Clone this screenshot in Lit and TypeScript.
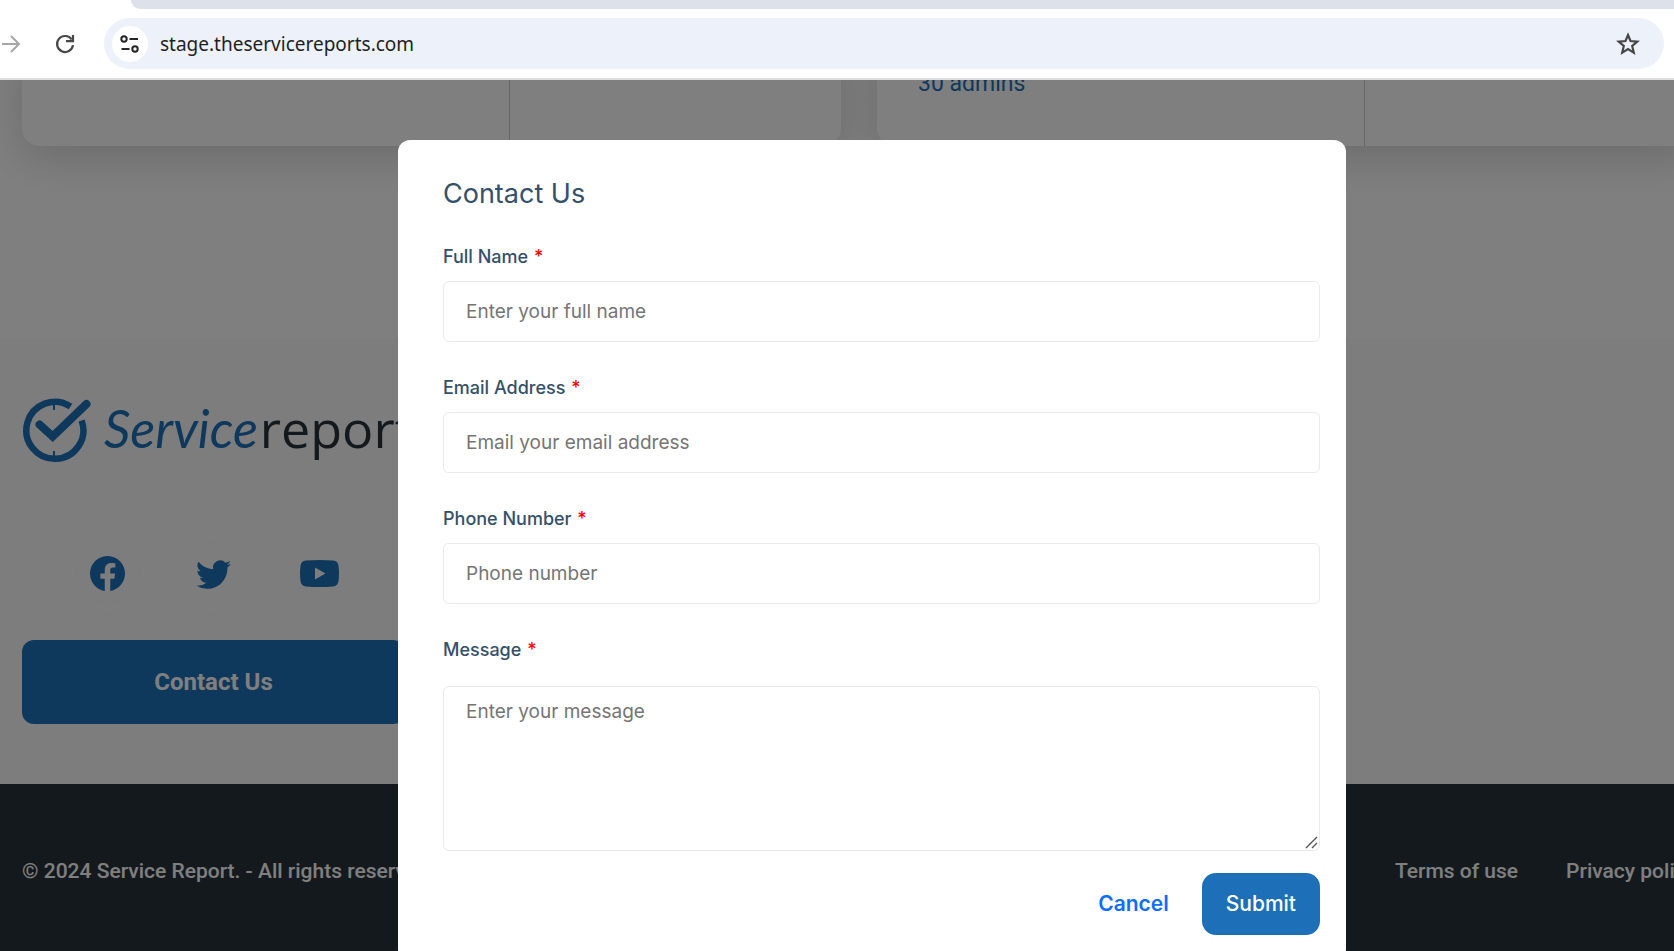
import { LitElement, html, css } from "lit";
import { customElement } from "lit/decorators.js";

@customElement("browser-bar")
export class BrowserBar extends LitElement {
  static styles = css`
    :host { display: block; background: #fff; }
    .tabs { display: flex; height: 9px; padding-left: 131px; }
    .strip { flex: 1; background: #dde1e9; border-bottom-left-radius: 12px; }
    .bar {
      display: flex; align-items: center; padding: 9px 10px 9px 0;
      border-bottom: 2px solid #dfdfdf;
    }
    .nav { display: flex; width: 104px; }
    button { border: 0; background: none; padding: 0; display: block; }
    .forward { width: 24px; height: 24px; }
    .reload { width: 24px; height: 24px; margin-left: 29px; }
    svg { display: block; }
    .omnibox {
      flex: 1; min-width: 0; display: flex; align-items: center; gap: 12px;
      height: 51px; border-radius: 26px; background: #ecf1fa; padding: 0 24px 0 8px;
      box-sizing: border-box;
    }
    .site { width: 36px; height: 36px; border-radius: 50%; background: #fff; }
    .url {
      flex: 1; min-width: 0; border: 0; background: none; outline: 0; padding: 0;
      color: #1f1f1f; font: 19px/28px "Noto Sans", sans-serif;
    }
  `;

  render() {
    return html`
      <div class="tabs"><div class="strip"></div></div>
      <div class="bar">
        <div class="nav">
          <button class="forward" aria-label="Forward">
            <svg width="24" height="24" viewBox="0 0 24 24" fill="none" stroke="#a6a6a6" stroke-width="2">
              <path d="M2 12H19M11 4l8 8-8 8" />
            </svg>
          </button>
          <button class="reload" aria-label="Reload">
            <svg width="24" height="24" viewBox="0 0 24 24" fill="none" stroke="#474747" stroke-width="2.2">
              <path d="M18.7 7.5A8 8 0 1 0 20 13.2" />
              <path d="M20 3v6.2h-7" />
            </svg>
          </button>
        </div>
        <div class="omnibox">
          <button class="site" aria-label="View site information">
            <svg width="36" height="36" viewBox="0 0 36 36" fill="none" stroke="#262626" stroke-width="2">
              <circle cx="12" cy="13" r="2.7" />
              <path d="M17.5 13h8.5M9.5 23h8" />
              <circle cx="23" cy="23" r="2.7" />
            </svg>
          </button>
          <input class="url" aria-label="Address" value="stage.theservicereports.com" />
          <button aria-label="Bookmark this tab">
            <svg width="24" height="24" viewBox="0 0 24 24" fill="none" stroke="#474747" stroke-width="2.2">
              <path d="M12 3l2.500 6 6.900.600-5.200 4.400 1.600 6.600-5.800-3.500-5.800 3.500 1.600-6.600-5.200-4.400 6.900-.600z" />
            </svg>
          </button>
        </div>
      </div>
    `;
  }
}

@customElement("site-page")
export class SitePage extends LitElement {
  static styles = css`
    :host {
      display: flex; flex-direction: column; height: 100%; background: #fff;
      font-family: Roboto, sans-serif;
    }
    .plans {
      display: grid; grid-template-columns: 1fr 1fr; gap: 36px;
      margin-top: -40px; padding: 0 48px 192px 22px;
    }
    .card {
      display: grid; grid-template-columns: 488px 1fr; height: 106px;
      background: #fff; border-radius: 0 0 18px 18px; box-shadow: 0 12px 44px rgba(0, 0, 0, 0.16);
    }
    .info {
      display: flex; flex-direction: column; justify-content: flex-end;
      padding: 0 41px 48px; border-right: 1px solid #c8ccd0;
      color: #1d70b8; font-size: 23px; line-height: 28px; font-weight: 400;
    }
    .about { flex: none; display: flex; background: #fafafa; padding: 60px 22px; }
    .column { width: 383px; display: flex; flex-direction: column; }
    .logo {
      display: flex; align-items: flex-start; height: 66px; white-space: nowrap;
      color: #28323a; font: 52px/60px "Open Sans", sans-serif; filter: blur(0.6px);
    }
    .logo svg { flex: none; margin-right: 12px; }
    .script { color: #1d70b8; font-family: Lato, sans-serif; font-style: italic; margin-right: 2px; }
    .social { display: flex; justify-content: center; gap: 34px; margin: 73px 0 31px; }
    .social a {
      width: 72px; height: 72px; box-sizing: border-box; border: 1px solid #fff; border-radius: 50%;
      display: grid; place-items: center; color: #1d70b8;
    }
    .contact {
      height: 84px; border: 0; border-radius: 12px; background: #1d70b8; color: #fff;
      font: 700 24px/32px Roboto, sans-serif;
    }
    .legal {
      flex: 1; display: flex; align-items: flex-start; justify-content: space-between;
      background: #28323a; color: #fff; padding: 71px 48px 0 22px;
      font-size: 21px; line-height: 32px; font-weight: 500; white-space: nowrap;
    }
    .links { display: flex; gap: 48px; }
    .links a { color: inherit; text-decoration: none; }
  `;

  render() {
    return html`
      <section class="plans">
        <div class="card"><div class="info"></div></div>
        <div class="card"><div class="info">30 admins</div></div>
      </section>
      <section class="about">
        <div class="column">
          <div class="logo">
            <svg width="70" height="66" viewBox="0 0 70 66" fill="none" stroke="#1d70b8">
              <path d="M48.5 8.5A28.500 28.500 0 1 0 59.600 22.500" stroke-width="6.5" />
              <path d="M17.500 26.500L30.700 38.500L64.500 6" stroke-width="8" stroke-linecap="round" stroke-linejoin="miter" />
              <path d="M32 5v7M32 53v7" stroke-width="2" />
            </svg>
            <span class="script">Service</span><span>reports</span>
          </div>
          <nav class="social" aria-label="Social media">
            <a href="#facebook" aria-label="Facebook">
              <svg width="35" height="35" viewBox="0 0 16 16" fill="currentColor">
                <path d="M16 8.049c0-4.446-3.582-8.050-8-8.050C3.580 0-.002 3.603-.002 8.050c0 4.017 2.926 7.347 6.750 7.951v-5.625h-2.030V8.050H6.750V6.275c0-2.017 1.195-3.131 3.022-3.131.876 0 1.791.157 1.791.157v1.980h-1.009c-.993 0-1.303.621-1.303 1.258v1.510h2.218l-.354 2.326H9.250V16c3.824-.604 6.750-3.934 6.750-7.951" />
              </svg>
            </a>
            <a href="#twitter" aria-label="Twitter">
              <svg width="35" height="35" viewBox="0 0 16 16" fill="currentColor">
                <path d="M5.026 15c6.038 0 9.341-5.003 9.341-9.334q.002-.211-.006-.422A6.700 6.700 0 0 0 16 3.542a6.700 6.700 0 0 1-1.889.518 3.300 3.300 0 0 0 1.447-1.817 6.500 6.500 0 0 1-2.087.793A3.286 3.286 0 0 0 7.875 6.030a9.320 9.320 0 0 1-6.767-3.429 3.290 3.290 0 0 0 1.018 4.382A3.300 3.300 0 0 1 .640 6.575v.045a3.290 3.290 0 0 0 2.632 3.218 3.200 3.200 0 0 1-.865.115 3 3 0 0 1-.614-.057 3.280 3.280 0 0 0 3.067 2.277A6.600 6.600 0 0 1 .780 13.580a6 6 0 0 1-.780-.045A9.340 9.340 0 0 0 5.026 15" />
              </svg>
            </a>
            <a href="#youtube" aria-label="YouTube">
              <svg width="39" height="27" viewBox="0 0 39 27" fill="currentColor" fill-rule="evenodd">
                <path d="M6 .6Q19.500-.6 33 .6Q38 1 38.500 6Q39.500 13.500 38.500 21Q38 26 33 26.400Q19.500 27.600 6 26.400Q1 26 .5 21Q-.5 13.500 .5 6Q1 1 6 .6zM15 7.500v12l10.500-6z" />
              </svg>
            </a>
          </nav>
          <button class="contact">Contact Us</button>
        </div>
      </section>
      <footer class="legal">
        <span>© 2024 Service Report. - All rights reserved.</span>
        <nav class="links" aria-label="Legal">
          <a href="#terms">Terms of use</a>
          <a href="#privacy">Privacy policy</a>
        </nav>
      </footer>
    `;
  }
}

const FIELDS = [
  { id: "name", label: "Full Name", type: "text", hint: "Enter your full name" },
  { id: "email", label: "Email Address", type: "email", hint: "Email your email address" },
  { id: "phone", label: "Phone Number", type: "tel", hint: "Phone number" },
];

@customElement("contact-dialog")
export class ContactDialog extends LitElement {
  static styles = css`
    :host {
      display: block; box-sizing: border-box; width: 948px; max-width: 100%;
      padding: 36px 26px 26px 45px; border-radius: 12px; background: #fff;
      font-family: Inter, sans-serif; color: #34506b;
    }
    h2 { margin: 0 0 33px; font-size: 27px; line-height: 36px; font-weight: 400; }
    form { display: flex; flex-direction: column; }
    .field { display: flex; flex-direction: column; gap: 12px; margin-bottom: 34px; }
    .message { gap: 24px; margin-bottom: 22px; }
    label { font-size: 18px; line-height: 24px; font-weight: 500; }
    .star { color: #f00; margin-left: 1px; }
    input, textarea {
      box-sizing: border-box; width: 100%; border: 1px solid #e8eaec; border-radius: 6px;
      padding: 0 22px; background: #fff; color: #34506b; font: 19px/30px Inter, sans-serif; outline: 0;
    }
    input { height: 61px; }
    textarea { display: block; height: 165px; padding: 10px 22px; resize: vertical; }
    textarea::-webkit-resizer {
      background: url("data:image/svg+xml,%3Csvg xmlns='http://www.w3.org/2000/svg' viewBox='0 0 15 15'%3E%3Cpath d='M2 13L13 2M8 13l5-5' stroke='%23555' stroke-width='1.4'/%3E%3C/svg%3E") center / 15px 15px no-repeat;
    }
    ::placeholder { color: #757575; opacity: 1; }
    .actions { display: flex; justify-content: flex-end; align-items: center; gap: 11px; }
    button { border: 0; background: none; font: 600 21px/28px Inter, sans-serif; }
    .cancel { color: #0d6efd; padding: 0 22px; }
    .submit {
      height: 62px; padding: 0 24px; border-radius: 14px; background: #1d70b8; color: #fff;
      font-weight: 500;
    }
  `;

  render() {
    return html`
      <h2 id="title">Contact Us</h2>
      <form>
        ${FIELDS.map(
          (f) => html`
            <div class="field">
              <label for=${f.id}>${f.label} <span class="star">*</span></label>
              <input id=${f.id} type=${f.type} placeholder=${f.hint} />
            </div>
          `
        )}
        <div class="field message">
          <label for="message">Message <span class="star">*</span></label>
          <textarea id="message" placeholder="Enter your message"></textarea>
        </div>
        <div class="actions">
          <button class="cancel" type="button">Cancel</button>
          <button class="submit" type="button">Submit</button>
        </div>
      </form>
    `;
  }
}

@customElement("app-root")
export class AppRoot extends LitElement {
  static styles = css`
    :host { display: flex; flex-direction: column; height: 100vh; overflow: hidden; }
    .view { position: relative; flex: 1; min-height: 0; overflow: hidden; }
    .page { width: calc(100% + 70px); height: 100%; }
    .overlay {
      position: absolute; top: 0; left: 0; width: calc(100% + 70px); height: 100%;
      display: flex; justify-content: center; align-items: flex-start;
      box-sizing: border-box; padding-top: 60px; background: rgba(0, 0, 0, 0.5);
    }
  `;

  render() {
    return html`
      <browser-bar></browser-bar>
      <main class="view">
        <site-page class="page"></site-page>
        <div class="overlay">
          <contact-dialog role="dialog" aria-label="Contact Us"></contact-dialog>
        </div>
      </main>
    `;
  }
}
